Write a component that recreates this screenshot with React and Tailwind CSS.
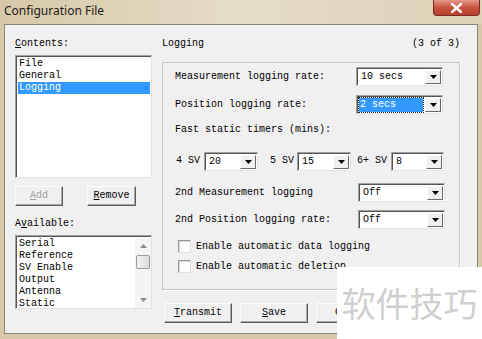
const mono = { fontFamily: '"Liberation Mono", "DejaVu Sans Mono", monospace' };

function Arrow({ color = "#000" }) {
	return (
		<svg width="7" height="4" viewBox="0 0 7 4">
			<path d="M0 0h7L3.5 4z" fill={color} />
		</svg>
	);
}

function Combo({ w, text, selected }) {
	return (
		<div
			className={`${w} h-[19px] flex bg-white border border-t-[#a0a0a0] border-l-[#a0a0a0] border-r-[#e3e3e3] border-b-[#e3e3e3] shadow-[inset_1px_1px_0_#555555] pt-[2px] pl-[2px] pr-[1px] pb-[1px]`}>
			<div className="flex-1 flex items-center pr-[2px]">
				{selected ?
					<div className="w-full h-[14px] flex items-center pl-[1px] bg-[#3399ff] text-white outline outline-1 outline-dotted outline-[#222]">
						{text}
					</div>
				:	<div className="pl-[2px]">{text}</div>}
			</div>
			<div className="w-[16px] h-full flex items-center justify-center bg-[#f0f0f0] border border-t-white border-l-white border-r-[#6a6a6a] border-b-[#6a6a6a]">
				<Arrow />
			</div>
		</div>
	);
}

function Btn({ w, children, disabled }) {
	return (
		<div
			className={`${w} h-[20px] flex items-center justify-center bg-[#f0f0f0] border border-t-[#fdfdfd] border-l-[#fdfdfd] border-r-[#5c5c5c] border-b-[#5c5c5c] shadow-[inset_-1px_-1px_0_#a8a8a8] ${disabled ? "text-[#a0a0a0]" : "text-black"}`}>
			{children}
		</div>
	);
}

function Check({ label }) {
	return (
		<div className="h-[13px] flex items-center gap-[5px] pl-[3px]">
			<div className="w-[13px] h-[13px] bg-white border border-t-[#9a9a9a] border-l-[#9a9a9a] border-r-[#e0e0e0] border-b-[#e0e0e0] shadow-[inset_1px_1px_0_#d8d8d8]" />
			<span>{label}</span>
		</div>
	);
}

const sunken =
	"bg-white border border-t-[#a0a0a0] border-l-[#a0a0a0] border-r-[#e3e3e3] border-b-[#e3e3e3] shadow-[inset_1px_1px_0_#555555]";

export default function App() {
	return (
		<div
			className="w-[482px] h-[339px] flex flex-col overflow-hidden relative bg-[#d6c8a8] text-[10px] leading-[12px] text-black"
			style={mono}>
			{/* Title bar */}
			<div className="h-[24px] flex items-start bg-gradient-to-r from-[#d7c9a8] via-[#e6ddc8] to-[#ddd1b6]">
				<div
					className="pl-[4px] pt-[2px] text-[12px] leading-[17px] text-[#1b1b1b]"
					style={{ fontFamily: '"Noto Sans", "Open Sans", sans-serif' }}>
					Configuration File
				</div>
				<div className="ml-auto mr-[2px] w-[47px] h-[16px] rounded-b-[4px] border border-t-0 border-[#7a2a22] bg-gradient-to-b from-[#e59a8c] via-[#c9523f] to-[#b9412f] flex items-center justify-center">
					<svg width="11" height="10" viewBox="0 0 11 10">
						<path d="M1 1l9 8M10 1l-9 8" stroke="#fff" strokeWidth="2.4" strokeLinecap="square" />
					</svg>
				</div>
			</div>

			{/* Dialog body */}
			<div className="mx-[4px] h-[310px] border border-[#8d8676] bg-[#f0f0f0] flex">
				{/* Left column */}
				<div className="w-[147px] pl-[10px] pt-[13px] flex flex-col">
					<div className="h-[12px]">
						<u>C</u>ontents:
					</div>
					<div className={`mt-[5px] h-[123px] ${sunken} pt-[2px] pl-[2px] pr-[1px] flex flex-col`}>
						<div className="h-[12px] pl-[1px]">File</div>
						<div className="h-[12px] pl-[1px]">General</div>
						<div className="h-[12px] pl-[1px] bg-[#3399ff] text-white">Logging</div>
					</div>
					<div className="mt-[8px] flex gap-[24px]">
						<Btn w="w-[48px]" disabled>
							<span>
								<u>A</u>dd
							</span>
						</Btn>
						<Btn w="w-[49px]">
							<span>
								<u>R</u>emove
							</span>
						</Btn>
					</div>
					<div className="mt-[12px] h-[12px]">
						A<u>v</u>ailable:
					</div>
					<div className={`mt-[5px] h-[74px] ${sunken} pt-[2px] pl-[2px] flex`}>
						<div className="flex-1 flex flex-col pl-[1px]">
							{["Serial", "Reference", "SV Enable", "Output", "Antenna", "Static"].map((t) => (
								<div key={t} className="h-[12px]">
									{t}
								</div>
							))}
						</div>
						<div className="w-[16px] bg-[#f4f4f4] flex flex-col items-center">
							<div className="h-[16px] flex items-center justify-center rotate-180">
								<Arrow color="#8a8a8a" />
							</div>
							<div className="mt-[1px] w-[14px] h-[14px] rounded-[2px] border border-[#9a9a9a] bg-gradient-to-r from-[#f4f4f4] to-[#dcdcdc]" />
							<div className="mt-auto h-[16px] flex items-center justify-center">
								<Arrow color="#8a8a8a" />
							</div>
						</div>
					</div>
				</div>

				{/* Right column */}
				<div className="ml-[10px] w-[298px] pt-[13px] flex flex-col">
					<div className="h-[12px] flex justify-between">
						<span>Logging</span>
						<span>(3 of 3)</span>
					</div>
					<div className="mt-[12px] h-[228px] border border-[#c4c4c4] shadow-[1px_1px_0_#ffffff] pl-[12px] flex flex-col">
						<div className="mt-[4px] h-[19px] flex items-center">
							<div className="w-[181px]">Measurement logging rate:</div>
							<Combo w="w-[87px]" text="10 secs" />
						</div>
						<div className="mt-[9px] h-[19px] flex items-center">
							<div className="w-[181px]">Position logging rate:</div>
							<Combo w="w-[87px]" text="2 secs" selected />
						</div>
						<div className="mt-[10px] h-[12px]">Fast static timers (mins):</div>
						<div className="mt-[16px] h-[18px] flex items-center">
							<span className="w-[29px] pl-[1px]">4 SV</span>
							<Combo w="w-[54px]" text="20" />
							<span className="ml-[12px] w-[27px]">5 SV</span>
							<Combo w="w-[54px]" text="15" />
							<span className="ml-[6px] w-[34px]">6+ SV</span>
							<Combo w="w-[53px]" text="8" />
						</div>
						<div className="mt-[13px] h-[19px] flex items-center">
							<div className="w-[183px]">2nd Measurement logging</div>
							<Combo w="w-[87px]" text="Off" />
						</div>
						<div className="mt-[8px] h-[19px] flex items-center">
							<div className="w-[183px]">2nd Position logging rate:</div>
							<Combo w="w-[87px]" text="Off" />
						</div>
						<div className="mt-[11px]">
							<Check label="Enable automatic data logging" />
						</div>
						<div className="mt-[7px]">
							<Check label="Enable automatic deletion" />
						</div>
					</div>
					<div className="mt-[13px] pl-[2px] flex gap-[8px]">
						<Btn w="w-[68px]">
							<span>
								<u>T</u>ransmit
							</span>
						</Btn>
						<Btn w="w-[68px]">
							<span>
								<u>S</u>ave
							</span>
						</Btn>
						<Btn w="w-[68px]">
							<span>Close</span>
						</Btn>
					</div>
				</div>
			</div>

			{/* Watermark overlay */}
			<div
				className="absolute left-[337px] top-[267px] w-[145px] h-[72px] bg-white flex items-center justify-center text-[34px] leading-[40px] text-[#cfcfcf]"
				style={{ fontFamily: '"Noto Sans CJK SC", sans-serif' }}>
				软件技巧
			</div>
		</div>
	);
}
